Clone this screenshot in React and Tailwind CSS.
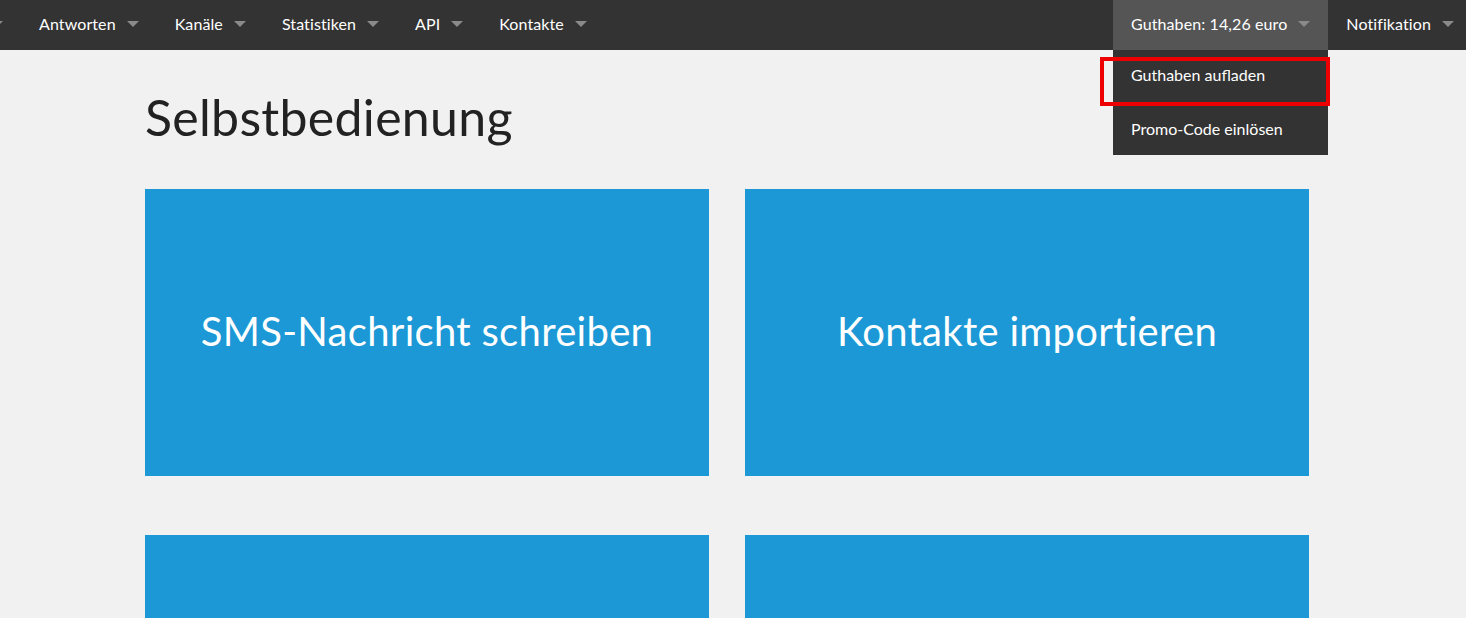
function Caret() {
  return <span className="ml-[11px] inline-block w-0 h-0 border-l-[6px] border-r-[6px] border-t-[6px] border-l-transparent border-r-transparent border-t-[#8a8a8a]" />
}

function NavItem({ label, active, children }) {
  return (
    <div className={`relative flex items-center h-full px-[18px] pb-[3px] ${active ? 'bg-[#555555]' : ''}`}>
      <span className="text-[16px] text-white tracking-[0.1px]">{label}</span>
      <Caret />
      {children}
    </div>
  )
}

function Tile({ title }) {
  return (
    <div className="h-[287px] bg-[#1b98d5] flex items-center justify-center pb-[3px]">
      {title && <span className="text-[40px] text-white tracking-[0.3px]">{title}</span>}
    </div>
  )
}

export default function App() {
  return (
    <div className="w-[1466px] h-[618px] overflow-hidden bg-[#f1f1f1]" style={{ fontFamily: 'Lato, "Open Sans", sans-serif' }}>
      {/* top navigation */}
      <div className="h-[50px] bg-[#333333] flex items-stretch relative z-10">
        <div className="flex items-stretch -ml-[9px]">
          <div className="flex items-center pr-[18px] pb-[3px]">
            <span className="inline-block w-0 h-0 border-l-[6px] border-r-[6px] border-t-[6px] border-l-transparent border-r-transparent border-t-[#8a8a8a]" />
          </div>
          <NavItem label="Antworten" />
          <NavItem label="Kanäle" />
          <NavItem label="Statistiken" />
          <NavItem label="API" />
          <NavItem label="Kontakte" />
        </div>
        <div className="flex-1" />
        <div className="flex items-stretch shrink-0 -mr-[6px]">
          <NavItem label="Guthaben: 14,26 euro" active>
            <div className="absolute left-0 top-[50px] w-full bg-[#333333]">
              <div className="h-[52px] flex items-center px-[18px] pb-[2px] text-[16px] text-white">Guthaben aufladen</div>
              <div className="h-[53px] flex items-center px-[18px] text-[16px] text-white">Promo-Code einlösen</div>
              <div className="absolute -left-[13px] top-[7px] w-[230px] h-[49px] border-4 border-[#ee0000]" />
            </div>
          </NavItem>
          <NavItem label="Notifikation" />
        </div>
      </div>

      {/* content */}
      <div className="pl-[145px] w-[1309px]">
        <h1 className="pt-[36px] text-[50px] leading-[62px] text-[#222222] tracking-[0.3px]">Selbstbedienung</h1>
        <div className="mt-[41px] grid grid-cols-2 gap-x-[36px] gap-y-[59px]">
          <Tile title="SMS-Nachricht schreiben" />
          <Tile title="Kontakte importieren" />
          <Tile />
          <Tile />
        </div>
      </div>
    </div>
  )
}
